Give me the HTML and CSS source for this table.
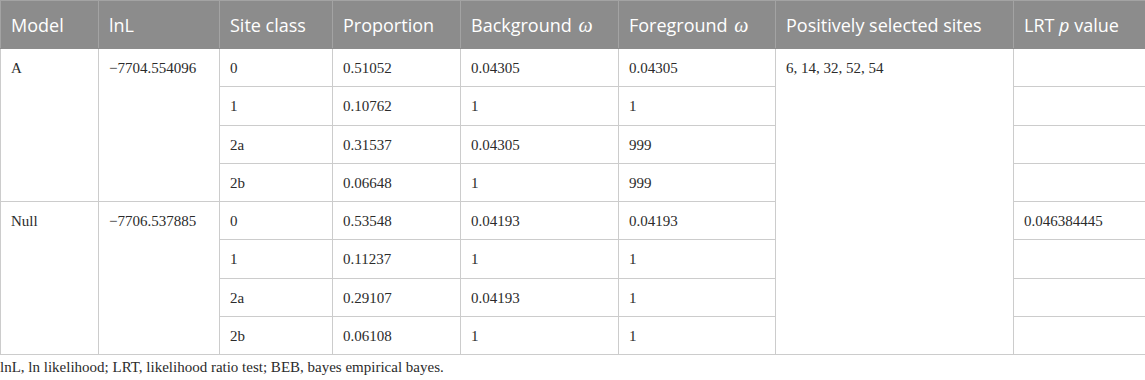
FILE: index.html
```html
<!DOCTYPE html>
<html>
<head>
<meta charset="utf-8">
<link rel="stylesheet" href="styles.css">
</head>
<body>
<table class="tbl">
  <colgroup>
    <col class="c1"><col class="c2"><col class="c3"><col class="c4"><col class="c5"><col class="c6"><col class="c7"><col class="c8">
  </colgroup>
  <thead>
    <tr>
      <th>Model</th>
      <th>lnL</th>
      <th>Site class</th>
      <th>Proportion</th>
      <th>Background <i class="om">ω</i></th>
      <th>Foreground <i class="om">ω</i></th>
      <th>Positively selected sites</th>
      <th>LRT <i>p</i> value</th>
    </tr>
  </thead>
  <tbody>
    <tr>
      <td rowspan="4">A</td>
      <td rowspan="4">−7704.554096</td>
      <td>0</td><td>0.51052</td><td>0.04305</td><td>0.04305</td>
      <td rowspan="8">6, 14, 32, 52, 54</td>
      <td></td>
    </tr>
    <tr><td>1</td><td>0.10762</td><td>1</td><td>1</td><td></td></tr>
    <tr><td>2a</td><td>0.31537</td><td>0.04305</td><td>999</td><td></td></tr>
    <tr><td>2b</td><td>0.06648</td><td>1</td><td>999</td><td></td></tr>
    <tr>
      <td rowspan="4">Null</td>
      <td rowspan="4">−7706.537885</td>
      <td>0</td><td>0.53548</td><td>0.04193</td><td>0.04193</td>
      <td>0.046384445</td>
    </tr>
    <tr><td>1</td><td>0.11237</td><td>1</td><td>1</td><td></td></tr>
    <tr><td>2a</td><td>0.29107</td><td>0.04193</td><td>1</td><td></td></tr>
    <tr><td>2b</td><td>0.06108</td><td>1</td><td>1</td><td></td></tr>
  </tbody>
</table>
<p class="note">lnL, ln likelihood; LRT, likelihood ratio test; BEB, bayes empirical bayes.</p>
</body>
</html>
```
FILE: styles.css
```css
html, body {
  margin: 0;
  padding: 0;
  background: #ffffff;
}
.tbl {
  border-collapse: collapse;
  table-layout: fixed;
  width: 1145px;
}
.c1 { width: 98px; }
.c2 { width: 121px; }
.c3 { width: 113px; }
.c4 { width: 128px; }
.c5 { width: 158px; }
.c6 { width: 157px; }
.c7 { width: 238px; }
.c8 { width: 132px; }
.tbl th {
  background: #8c8c8c;
  color: #ffffff;
  font-family: "Open Sans", sans-serif;
  font-weight: 400;
  font-size: 18px;
  text-align: left;
  height: 48px;
  padding: 0 0 0 10px;
  border: 1px solid #a3a3a3;
  border-bottom-color: #8c8c8c;
  box-sizing: border-box;
  vertical-align: middle;
  white-space: nowrap;
}
.tbl th .om {
  font-family: "Liberation Serif", serif;
  font-style: italic;
  font-size: 20px;
  margin-left: 2px;
}
.tbl td {
  font-family: "Liberation Serif", serif;
  font-size: 15px;
  color: #2b2b2b;
  text-align: left;
  vertical-align: top;
  padding: 10px 0 0 10px;
  height: 38.3px;
  box-sizing: border-box;
  line-height: 18px;
  border: 1px solid #cccccc;
}
.tbl tbody tr {
  height: 38.3px;
}
.note {
  margin: 0;
  padding-top: 3px;
  font-family: "Liberation Serif", serif;
  font-size: 15px;
  line-height: 18px;
  color: #2b2b2b;
}
```
